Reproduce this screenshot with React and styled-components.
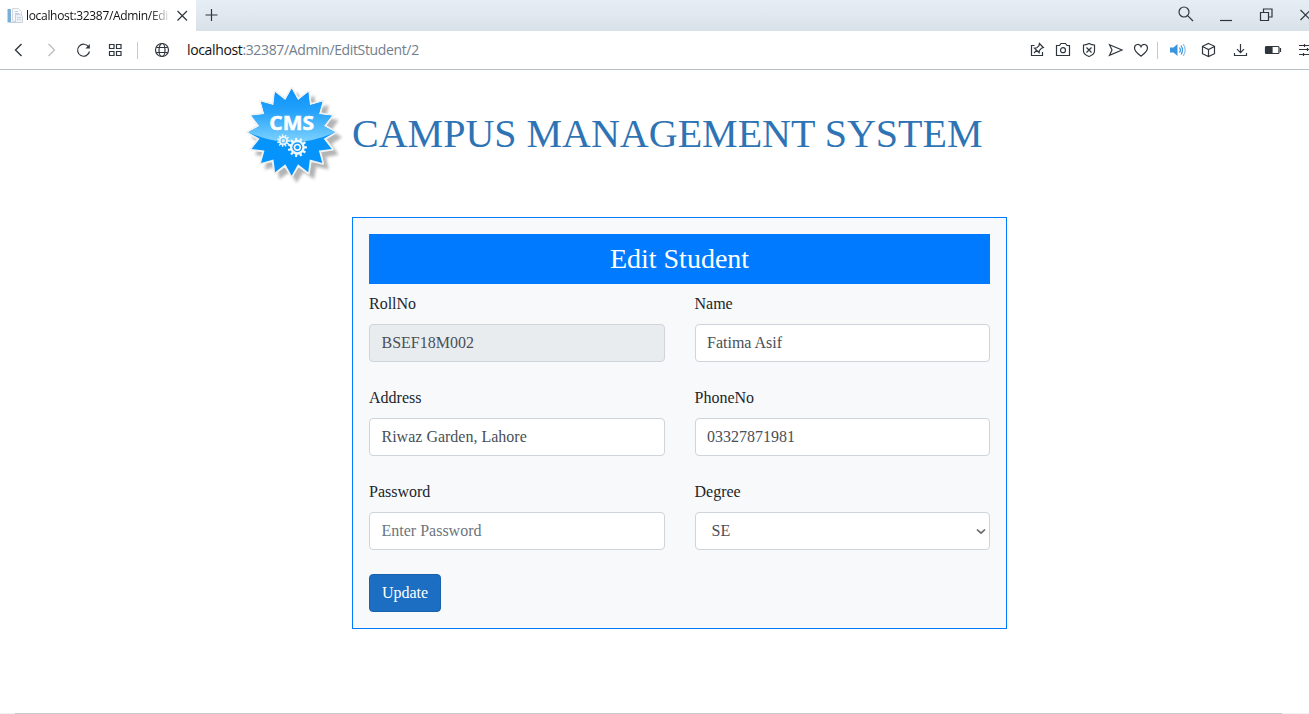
import React from "react";
import styled, { createGlobalStyle } from "styled-components";

const GlobalStyle = createGlobalStyle`
  *, *::before, *::after { box-sizing: border-box; }
  html, body { margin: 0; overflow: hidden; background: #fff; }
  body { font: 16px/1.5 "Liberation Serif", "Times New Roman", serif; color: #212529; }
`;

const Window = styled.div`
  display: flex;
  flex-direction: column;
  width: 1309px;
  height: 714px;
  overflow: hidden;
`;

const TabStrip = styled.div`
  display: flex;
  align-items: center;
  height: 31px;
  flex: none;
  background: linear-gradient(#e5edf5, #e1e8f0 50%, #d8e0e8);
`;

const Tab = styled.div`
  display: flex;
  align-items: center;
  width: 196px;
  height: 31px;
  padding-left: 7px;
  background: #fff;
`;

const TabTitle = styled.span`
  width: 143px;
  margin-left: 3px;
  overflow: hidden;
  white-space: nowrap;
  font: 12px/20px "Open Sans", sans-serif;
  letter-spacing: -0.32px;
  color: #111;
  mask-image: linear-gradient(90deg, #000 124px, transparent 145px);
`;

const Toolbar = styled.div`
  display: flex;
  align-items: center;
  height: 39px;
  flex: none;
  padding-left: 9px;
  border-bottom: 1px solid #b6bec6;
  background: #fff;
`;

const Icon = styled.svg.attrs({ viewBox: "0 0 20 20" })`
  width: 20px;
  height: 20px;
  flex: none;
  margin-left: ${(p) => p.$gap || 0}px;
  fill: none;
  stroke: ${(p) => p.$color || "#2f363d"};
  stroke-width: ${(p) => p.$weight || 1.2};
`;

const Divider = styled.span`
  width: 1px;
  height: 17px;
  flex: none;
  margin-left: ${(p) => p.$gap}px;
  background: #c5c9cd;
`;

const Url = styled.span`
  margin-left: 15px;
  white-space: nowrap;
  font: 14px/20px "Open Sans", sans-serif;
  letter-spacing: -0.36px;
  color: #72808e;
`;

const Host = styled.span`
  color: #111;
`;

const ToolGroup = styled.div`
  display: flex;
  align-items: center;
  width: ${(p) => p.$width}px;
  flex: none;
  margin-left: auto;
  padding-bottom: ${(p) => p.$lift || 0}px;
  overflow: hidden;
`;

const Page = styled.main`
  display: flex;
  flex-direction: column;
  flex: 1;
`;

const Brand = styled.header`
  display: flex;
  padding: 15px 0 0 246px;
`;

const Logo = styled.svg`
  width: 106px;
  height: 105px;
  flex: none;
`;

const Title = styled.h1`
  margin: 25px 0 0;
  white-space: nowrap;
  font-size: 40px;
  font-weight: 400;
  line-height: 48px;
  color: #2e74b5;
`;

const Card = styled.form`
  width: 655px;
  margin: 27px 0 0 352px;
  padding: 16px;
  border: 1px solid #007bff;
  background: #f8f9fb;
`;

const CardTitle = styled.h3`
  height: 50px;
  margin: 0 0 8px;
  padding: 8px 0;
  background: #007bff;
  color: #fff;
  font-size: 28px;
  font-weight: 400;
  line-height: 34px;
  text-align: center;
`;

const Fields = styled.div`
  display: grid;
  grid-template-columns: 1fr 1fr;
  gap: 24px 30px;
`;

const Field = styled.label`
  display: flex;
  flex-direction: column;
  gap: 8px;
`;

const Input = styled.input`
  width: 100%;
  height: 38px;
  padding: 6px 12px 6px 11.5px;
  border: 1px solid #ced4da;
  border-radius: 4px;
  background: ${(p) => (p.$locked ? "#e9ecef" : "#fff")};
  color: #495057;
  font: inherit;
  &::placeholder { color: #6c757d; opacity: 1; }
`;

const SelectBox = styled.div`
  position: relative;
  height: 38px;
`;

const Select = styled.select`
  display: block;
  appearance: none;
  width: 100%;
  height: 38px;
  padding: 6px 16px;
  border: 1px solid #ced4da;
  border-radius: 4px;
  background: #fff;
  color: #495057;
  font: inherit;
`;

const Chevron = styled.svg`
  position: absolute;
  right: 4px;
  top: 16px;
  width: 10px;
  height: 7px;
  fill: none;
  stroke: #666;
  stroke-width: 1.7;
  pointer-events: none;
`;

const Submit = styled.button`
  display: block;
  width: 72px;
  height: 38px;
  margin-top: 24px;
  padding: 0;
  border: 1px solid #1861ac;
  border-radius: 4px;
  background: #1b6ec2;
  color: #fff;
  font: inherit;
`;

const ScrollTrack = styled.div`
  height: 1px;
  flex: none;
  padding: 0 27px 0 15px;
  background: #f1f1f1;
`;

const ScrollThumb = styled.div`
  height: 1px;
  background: #c9c9c9;
`;

const polar = (cx, cy, r, a) => `${(cx + r * Math.cos(a)).toFixed(2)},${(cy + r * Math.sin(a)).toFixed(2)}`;

const star = (cx, cy, outer, inner, n) =>
  Array.from({ length: n * 2 }, (_, i) =>
    polar(cx, cy, i % 2 ? inner : outer, (i * Math.PI) / n)
  ).join(" ");

const cog = (cx, cy, outer, inner, n) =>
  Array.from({ length: n }, (_, i) => {
    const a = (i * 2 * Math.PI) / n;
    const s = (2 * Math.PI) / n;
    return [
      polar(cx, cy, inner, a - s * 0.28),
      polar(cx, cy, outer, a - s * 0.2),
      polar(cx, cy, outer, a + s * 0.2),
      polar(cx, cy, inner, a + s * 0.28),
    ].join(" ");
  }).join(" ");

function CmsLogo() {
  return (
    <Logo viewBox="33 15 318 315" aria-label="CMS">
      <defs>
        <linearGradient id="gloss" x1="0" y1="0" x2="0" y2="1">
          <stop offset="0" stopColor="#0791fb" />
          <stop offset="0.45" stopColor="#25a2fb" />
          <stop offset="1" stopColor="#7fd3fd" />
        </linearGradient>
        <clipPath id="badge">
          <polygon points={star(170, 157, 130, 98, 16)} />
        </clipPath>
        <filter id="soft" x="-20%" y="-20%" width="140%" height="140%">
          <feGaussianBlur stdDeviation="4" />
        </filter>
      </defs>
      <polygon points={star(185, 172, 136, 106, 16)} fill="#777" opacity="0.55" filter="url(#soft)" />
      <polygon points={star(170, 157, 133, 102, 16)} fill="#eef1f3" stroke="#eef1f3" strokeWidth="7" strokeLinejoin="round" />
      <g clipPath="url(#badge)">
        <rect x="30" y="20" width="280" height="275" fill="#0593fc" />
        <path d="M30 20H310V153Q235 187 170 187T30 153Z" fill="url(#gloss)" />
      </g>
      <text
        x="170" y="149" textAnchor="middle" textLength="134" lengthAdjust="spacingAndGlyphs"
        fontFamily="Open Sans, sans-serif" fontWeight="700" fontSize="58" fill="#fff"
        stroke="#fff" strokeWidth="1.5"
      >
        CMS
      </text>
      <polygon points={cog(145, 182, 19, 14, 11)} fill="#e4f4fe" />
      <circle cx="145" cy="182" r="8" fill="#58bbfc" />
      <circle cx="145" cy="182" r="5" fill="#d9effe" />
      <polygon points={cog(187, 202, 29, 22, 11)} fill="#eef8ff" />
      <circle cx="187" cy="202" r="15" fill="#1296fa" />
      <circle cx="187" cy="202" r="11" fill="#f1f9ff" />
      <circle cx="187" cy="202" r="6" fill="#1296fa" />
    </Logo>
  );
}

function Favicon() {
  return (
    <svg width="16" height="16" viewBox="0 0 16 16">
      <path d="M5.5.5h6l3 3v10h-9z" fill="#f6f8fa" stroke="#d3d9df" />
      <path d="M8 3.500h3M8 5.500h4" stroke="#bdd0e2" />
      <path d="M8.500 6.500h5l2 2v6h-7z" fill="#eef2f6" stroke="#cbd2d9" />
      <path d="M10 9.500h4M10 11.500h4" stroke="#c5d5e3" />
      <path d="M.5 1h3.500v13.500H.5z" fill="#7ab0d7" />
      <path d="M4 14.500h5" stroke="#c3cbd3" />
    </svg>
  );
}

export default function App() {
  return (
    <Window>
      <GlobalStyle />
      <TabStrip>
        <Tab>
          <Favicon />
          <TabTitle>localhost:32387/Admin/EditStudent/2</TabTitle>
          <Icon $gap={3}><path d="M5.500 5l9.500 9.500M15 5L5.500 14.500" /></Icon>
        </Tab>
        <Icon $gap={5}><path d="M10.500 3v12M4.500 9h12" /></Icon>
        <ToolGroup $width={133} $lift={3}>
          <Icon><circle cx="8" cy="8" r="5" /><path d="M11.600 11.600l5.400 5.400" /></Icon>
          <Icon $gap={20}><path d="M4 16.500h12" /></Icon>
          <Icon $gap={20}><path d="M4.500 8.500h8v8h-8zM7.500 8.500v-3.500h8.500v8h-3.500" /></Icon>
          <Icon $gap={20}><path d="M4.500 6l10 10M14.500 6l-10 10" /></Icon>
        </ToolGroup>
      </TabStrip>
      <Toolbar>
        <Icon $weight={1.4}><path d="M12.500 4L6.500 10l6 6" /></Icon>
        <Icon $gap={12} $color="#b9bcbf"><path d="M7.500 4l6 6-6 6" /></Icon>
        <Icon $gap={12}>
          <path d="M15.700 7A6 6 0 1 0 16.500 11.500" /><path d="M16.800 4v4.400h-4.400z" fill="#2f363d" stroke="none" />
        </Icon>
        <Icon $gap={12}><path d="M4.500 4.500h4.500v4h-4.500zM11.500 4.500h4.500v4h-4.500zM4.500 11.500h4.500v4h-4.500zM11.500 11.500h4.500v4h-4.500z" /></Icon>
        <Divider $gap={12} />
        <Icon $gap={14}>
          <circle cx="10" cy="10" r="6.500" /><ellipse cx="10" cy="10" rx="3" ry="6.500" />
          <path d="M4.300 7.500h11.400M4.300 12.500h11.400" />
        </Icon>
        <Url><Host>localhost</Host>:32387/Admin/EditStudent/2</Url>
        <ToolGroup $width={282}>
          <Icon>
            <path d="M7.500 5.500h-3v10h11v-3.500" />
            <path d="M12.400 3.500l4 4-1.900.7-2.100 2.300-.3 2.200-4.600-4.600 2.300-.3 2.200-2.200zM9.500 10.300L7 13" />
          </Icon>
          <Icon $gap={6}><path d="M3.500 5.500h3l1.500-2h4.500l1.500 2h2.500v10h-13z" /><circle cx="10" cy="10.200" r="2.500" /></Icon>
          <Icon $gap={6}>
            <path d="M10 3.500c1.800 1 3.500 1.500 5.500 1.500v6c0 2.500-2.300 4.300-5.500 5.500-3.200-1.200-5.500-3-5.500-5.500v-6c2 0 3.700-.5 5.500-1.500z" />
            <path d="M7.500 7.500l5 5M12.500 7.500l-5 5" />
          </Icon>
          <Icon $gap={6}><path d="M4.500 4.700L17 10 4.500 15.300 7 10z" /></Icon>
          <Icon $gap={6}>
            <path d="M10 16.200C6.500 13.500 3.500 11.500 3.500 8c0-4.300 5.200-4.600 6.500-1.300C11.300 3.400 16.500 3.700 16.500 8c0 3.500-3 5.500-6.500 8.200z" />
          </Icon>
          <Divider $gap={6} />
          <Icon $gap={10} $color="#3995dc">
            <path d="M2 7.500h3.500l4-3.500v12l-4-3.500H2z" fill="#3995dc" stroke="none" />
            <path d="M11.500 7.500q1.800 2.500 0 5M13 5.500q3 4.500 0 9" /><path d="M15.200 4q4 6 0 12" opacity="0.6" />
          </Icon>
          <Icon $gap={11}><path d="M9.500 3.500l6 2.800v7.400l-6 2.800-6-2.800v-7.400zM3.500 6.500l6 3 6-3M9.500 9.500v7" /></Icon>
          <Icon $gap={11}><path d="M10.500 4v8.500M7 9.200l3.500 3.500 3.500-3.500M4.500 13v2.500h12v-2.500" /></Icon>
          <Icon $gap={13}>
            <rect x="2.500" y="6.500" width="13.500" height="7" rx="1" /><path d="M3 7h6v6h-6z" fill="#2f363d" />
            <path d="M17.500 8v4" />
          </Icon>
          <Icon $gap={15}>
            <path d="M1 5.500h15M1 9.500h15M1 14.500h15M6.500 4v3M9.500 8v3M5.500 13v3" />
          </Icon>
        </ToolGroup>
      </Toolbar>
      <Page>
        <Brand>
          <CmsLogo />
          <Title>CAMPUS MANAGEMENT SYSTEM</Title>
        </Brand>
        <Card>
          <CardTitle>Edit Student</CardTitle>
          <Fields>
            <Field>RollNo<Input readOnly $locked value="BSEF18M002" /></Field>
            <Field>Name<Input defaultValue="Fatima Asif" /></Field>
            <Field>Address<Input defaultValue="Riwaz Garden, Lahore" /></Field>
            <Field>PhoneNo<Input defaultValue="03327871981" /></Field>
            <Field>Password<Input type="password" placeholder="Enter Password" /></Field>
            <Field>
              Degree
              <SelectBox>
                <Select defaultValue="SE"><option>SE</option><option>CS</option><option>IT</option></Select>
                <Chevron viewBox="0 0 10 7"><path d="M1 1.500l4 3.700 4-3.700" /></Chevron>
              </SelectBox>
            </Field>
          </Fields>
          <Submit type="button">Update</Submit>
        </Card>
      </Page>
      <ScrollTrack><ScrollThumb /></ScrollTrack>
    </Window>
  );
}
